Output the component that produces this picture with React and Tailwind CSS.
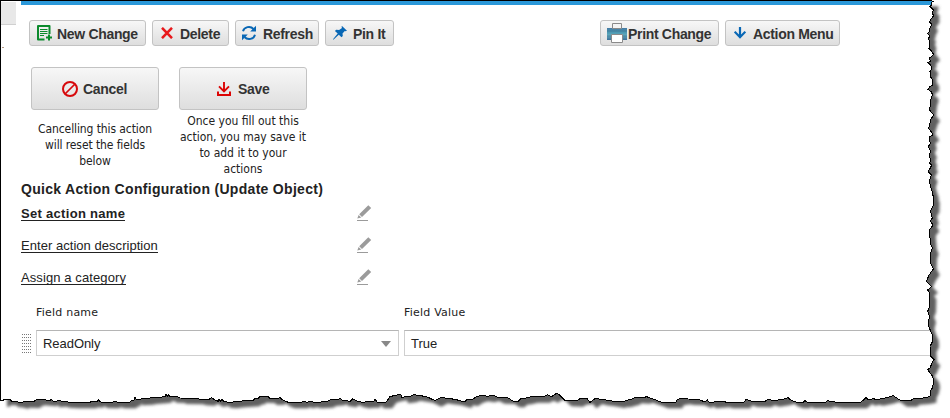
import React from "react";

// Torn page edge, in thirds of a pixel. Each run has its own origin.
const shift = (dx, dy, points) => points.map(([x, y]) => [x + dx, y + dy]);

const rightEdge = [
  ...shift(2670, 0, [
    [120, 1], [130, 4], [124, 8], [126, 14], [120, 20], [130, 30], [128, 38], [130, 48], [118, 65], [125, 72],
    [122, 80], [117, 90], [118, 96], [113, 100], [120, 108], [115, 115], [120, 125], [117, 145], [122, 150],
    [131, 163], [118, 175], [122, 183], [113, 188], [122, 195], [126, 205], [120, 215], [121, 230], [128, 240],
    [128, 255], [120, 260], [113, 268], [125, 276], [127, 285], [122, 300], [119, 330], [131, 345], [124, 355],
    [118, 375], [116, 385], [126, 398], [128, 405], [117, 412], [121, 430], [115, 440], [122, 455], [117, 465],
    [122, 480], [119, 490], [125, 496], [115, 515], [124, 525], [118, 545], [122, 560], [127, 575], [127, 585],
    [130, 588], [129, 620],
  ]),
  ...shift(2670, 624, [
    [124, 2], [122, 10], [127, 30], [121, 38], [129, 52], [118, 65], [120, 90], [121, 105], [127, 120], [122, 135],
    [121, 165], [130, 183], [118, 200], [109, 220], [125, 236], [113, 246], [120, 256], [119, 295], [113, 310],
    [119, 325], [114, 345], [118, 360], [127, 380], [128, 400], [120, 415], [122, 445], [132, 455], [126, 465],
    [120, 480], [113, 485], [128, 505], [131, 520], [127, 540], [121, 550],
  ]),
];

const bottomEdge = [
  ...shift(0, 1110, [
    [2, 92], [10, 92], [12, 88], [30, 88], [36, 94], [45, 94], [65, 98], [70, 95], [100, 96], [108, 90], [115, 88],
    [150, 91], [155, 88], [160, 94], [180, 92], [190, 95], [215, 97], [270, 97], [275, 94], [290, 95], [295, 90],
    [302, 96], [335, 97], [345, 94], [355, 97], [390, 97], [393, 92], [402, 90], [405, 82], [408, 88], [440, 86],
    [450, 84], [480, 82], [495, 80], [498, 73], [502, 78], [505, 74], [510, 80], [535, 81], [540, 84], [590, 85],
    [600, 88], [625, 89], [635, 83], [645, 90], [655, 94], [657, 88], [662, 94], [665, 88], [672, 95], [690, 97],
    [715, 94], [740, 92], [760, 91], [765, 86], [775, 85], [780, 80], [805, 81], [812, 87], [835, 86], [840, 82],
    [848, 90], [865, 97], [905, 97], [910, 94], [922, 97],
  ]),
  ...shift(930, 1110, [
    [0, 94], [15, 97], [50, 95], [60, 90], [85, 88], [92, 84], [95, 90], [120, 94], [128, 87], [140, 93], [158, 97],
    [175, 95], [190, 95], [195, 88], [202, 97], [228, 97], [240, 80], [255, 76], [272, 73], [275, 82], [300, 79],
    [312, 74], [350, 80], [375, 92], [395, 82], [405, 84], [435, 88], [465, 96], [470, 88], [485, 90], [500, 80],
    [515, 76], [535, 79], [548, 75], [565, 83], [595, 84], [610, 94], [625, 94], [632, 86], [645, 85], [665, 80],
    [700, 80], [712, 74], [725, 80], [738, 71], [745, 72], [765, 91], [800, 92], [810, 86], [830, 84], [840, 97],
    [858, 84], [870, 88], [895, 91], [925, 96],
  ]),
  ...shift(1860, 1110, [
    [0, 94], [15, 93], [25, 90], [40, 86], [45, 82], [70, 83], [80, 80], [90, 84], [110, 91], [125, 97], [168, 97],
    [172, 88], [190, 85], [205, 87], [235, 88], [245, 92], [255, 96], [262, 90], [268, 97], [310, 94], [320, 97],
    [372, 97], [378, 88], [392, 93], [435, 94], [445, 88], [460, 92], [490, 88], [505, 83], [512, 90], [530, 97],
    [550, 97], [555, 92], [562, 97], [618, 97], [622, 92], [650, 97], [722, 97], [730, 90], [738, 83], [745, 89],
    [760, 86], [770, 89], [800, 83], [820, 77], [830, 84], [842, 92], [872, 92], [880, 86], [910, 84], [930, 80],
  ]),
];

const outline = "M" + [[1, 1], ...rightEdge, ...[...bottomEdge].reverse()].map((p) => p.join(" ")).join("L") + "Z";

function TornEdge() {
  return (
    <svg className="pointer-events-none absolute inset-0 h-[418px] w-[950px]" viewBox="0 0 2850 1254">
      <defs>
        <clipPath id="outside">
          <path clipRule="evenodd" d={"M-30 -30H2900V1300H-30Z" + outline} />
        </clipPath>
        <filter id="soft" x="-5%" y="-5%" width="110%" height="110%">
          <feGaussianBlur stdDeviation="4.5" />
        </filter>
      </defs>
      <g clipPath="url(#outside)">
        <rect width="2850" height="1254" fill="#fff" />
        <path d={outline} transform="translate(19 18)" fill="#606060" filter="url(#soft)" />
      </g>
      <path d={outline} fill="none" stroke="#000" strokeWidth="3" shapeRendering="crispEdges" />
      <path d="M0 1.5H2793" stroke="#000" strokeWidth="3" />
      <path d="M1.5 0V1203" stroke="#000" strokeWidth="3" />
    </svg>
  );
}

function NewIcon() {
  return (
    <svg className="h-4 w-4 shrink-0" viewBox="0 0 16 16" fill="none" stroke="#0b8a2c">
      <path d="M8.500 14.500H2V1h11.500v8" strokeWidth="2" strokeLinejoin="round" />
      <path d="M4 4.500h7.500M4 6.500h7.500M4 8.500h7.500M4 10.500h4" strokeWidth="1" />
      <path d="M13 9.500v6M10 12.500h6" strokeWidth="2" />
    </svg>
  );
}

function DeleteIcon() {
  return (
    <svg className="h-3 w-3 shrink-0" viewBox="0 0 12 12">
      <path d="M1 .8 11 11.200M11 .8 1 11.200" stroke="#e8191c" strokeWidth="2.500" />
    </svg>
  );
}

function RefreshIcon() {
  return (
    <svg className="h-4 w-4 shrink-0" viewBox="0 0 16 16" fill="none">
      <path d="M2 6.300A6 5.500 0 0 1 12.500 4M14 9.700A6 5.500 0 0 1 3.500 12" stroke="#0867b5" strokeWidth="1.900" />
      <path d="M15 .8v5.700H9.200ZM1 15.200V9.500h5.800Z" fill="#0867b5" />
    </svg>
  );
}

function PinIcon() {
  return (
    <svg className="h-[14px] w-[14px] shrink-0" viewBox="0 0 14 14" fill="#0867b5">
      <path d="M9 0l5 4.700-1.400.5-.8-.3L9.500 7.500l.3 2.600L8.500 11.200 5.800 8.700.4 13.700l-.4-.4L4.700 7.500 1.900 5l1.300-1.200 2.900.3L9 2 8.500.8Z" />
    </svg>
  );
}

function PrinterIcon() {
  return (
    <svg className="h-5 w-5 shrink-0" viewBox="0 0 20 20">
      <defs>
        <linearGradient id="ink" x1="0" y1="0" x2="0" y2="1">
          <stop offset="0" stopColor="#467ba5" />
          <stop offset=".4" stopColor="#4d9bb3" />
          <stop offset=".6" stopColor="#63a9bd" />
          <stop offset="1" stopColor="#3c6f98" />
        </linearGradient>
      </defs>
      <path d="M0 5h20v12H0Z" fill="url(#ink)" />
      <path d="M0 8h20M0 13h20" stroke="#39728f" strokeWidth=".6" />
      <path d="M5.500.5h9v5h-9Z" fill="#f4f4f4" stroke="#8a8a8a" />
      <path d="M4.500 11.500h11v8h-11Z" fill="#fff" stroke="#8a8a8a" />
    </svg>
  );
}

function ArrowIcon() {
  return (
    <svg className="h-3 w-3 shrink-0" viewBox="0 0 12 12" fill="none" stroke="#0867b5">
      <path d="M6 0v10.500M.7 4.700 6 10.200l5.300-5.500" strokeWidth="2.200" />
    </svg>
  );
}

function CancelIcon() {
  return (
    <svg className="h-4 w-4 shrink-0" viewBox="0 0 16 16" fill="none" stroke="#d7090c" strokeWidth="2">
      <circle cx="8" cy="8" r="7" />
      <path d="M3 13 13 3" strokeWidth="1.700" />
    </svg>
  );
}

function SaveIcon() {
  return (
    <svg className="h-[14px] w-[14px] shrink-0" viewBox="0 0 14 14" fill="none" stroke="#dc0505">
      <path d="M7 0v9M2 4.300 7 9.300l5-5" strokeWidth="1.900" />
      <path d="M1 9.500V13h12V9.500" strokeWidth="2" />
    </svg>
  );
}

function PencilIcon() {
  return (
    <svg className="h-4 w-[15px]" viewBox="0 0 15 16" fill="#9b9b9b">
      <path d="M11.300.3 14.200 3 5 12 2.200 9.200ZM1.600 9.900 4.300 12.600.3 13.500Z" />
      <path d="M0 15h11v1H0Z" />
    </svg>
  );
}

const face =
  "rounded-[3px] border border-[#c3c3c3] bg-linear-to-b from-[#f7f7f7] to-[#dedede] font-bold text-[#333] tracking-[-0.32px] text-[14px]";

function ToolButton({ icon, label, className, textClass }) {
  return (
    <button className={`flex h-[26px] items-center ${face} ${className}`}>
      {icon}
      <span className={`whitespace-nowrap pt-[2px] leading-none ${textClass}`}>{label}</span>
    </button>
  );
}

function BigAction({ icon, label, note, noteClass }) {
  return (
    <div className="flex w-[128px] flex-col">
      <button className={`flex h-[43px] shrink-0 items-center ${face}`}>
        {icon}
        <span className="pt-px">{label}</span>
      </button>
      <p className={`whitespace-pre text-center font-['DejaVu_Sans_Condensed',sans-serif] text-[12px] leading-4 text-[#222] ${noteClass}`}>
        {note}
      </p>
    </div>
  );
}

function SettingRow({ label, className }) {
  return (
    <div className="flex h-8 w-[351px] items-start justify-between">
      <a className={`mt-[2px] border-b border-[#222] leading-[13px] ${className}`}>{label}</a>
      <PencilIcon />
    </div>
  );
}

export default function App() {
  return (
    <div className="relative h-[418px] w-[950px] overflow-hidden bg-white font-['Liberation_Sans',Arial,sans-serif] text-[13px] text-[#222]">
      <div className="flex h-[400px] w-[934px] pt-px">
        <aside className="flex w-[21px] shrink-0 flex-col pl-px pt-px">
          <div className="h-[23px] w-[15px] border-b border-[#d0d0d0] bg-[#e8e8e8]" />
          <div className="ml-px mt-[22px] h-px w-[2px] bg-[#b59a86]" />
        </aside>
        <main className="flex min-w-0 grow flex-col">
          <div className="h-1 shrink-0 bg-[#2b98d9]" />
          <div className="flex pl-2 pt-[15px]">
            <div className="flex gap-[6px]">
              <ToolButton icon={<NewIcon />} label="New Change" className="w-[117px] pl-[6px]" textClass="ml-[5px]" />
              <ToolButton icon={<DeleteIcon />} label="Delete" className="w-[77px] pl-2" textClass="ml-[7px]" />
              <ToolButton icon={<RefreshIcon />} label="Refresh" className="w-[84px] pl-[5px]" textClass="ml-[6px]" />
              <ToolButton icon={<PinIcon />} label="Pin It" className="w-[69px] pl-[7px]" textClass="ml-[6px]" />
            </div>
            <div className="ml-[206px] flex gap-[6px]">
              <ToolButton icon={<PrinterIcon />} label="Print Change" className="w-[119px] pl-[6px]" textClass="ml-px" />
              <ToolButton icon={<ArrowIcon />} label="Action Menu" className="w-[115px] pl-2" textClass="ml-[7px]" />
            </div>
          </div>
          <div className="flex h-[135px] shrink-0 gap-5 pl-[10px] pt-[21px]">
            <BigAction
              icon={<span className="ml-[30px] mr-[5px]"><CancelIcon /></span>}
              label="Cancel"
              note={"Cancelling this action\nwill reset the fields\nbelow"}
              noteClass="mt-[11px] tracking-[-0.1px]"
            />
            <BigAction
              icon={<span className="ml-[37px] mr-[7px]"><SaveIcon /></span>}
              label="Save"
              note={"Once you fill out this\naction, you may save it\nto add it to your\nactions"}
              noteClass="mt-[3px]"
            />
          </div>
          <h1 className="whitespace-nowrap text-[14px] font-bold leading-[16px] tracking-[0.3px]">
            Quick Action Configuration (Update Object)
          </h1>
          <div className="mt-[8px] flex flex-col">
            <SettingRow label="Set action name" className="font-bold tracking-[0.3px]" />
            <SettingRow label="Enter action description" className="tracking-[0.04px]" />
            <SettingRow label="Assign a category" className="tracking-[0.1px]" />
          </div>
          <div className="flex pl-[15px] pt-1 font-['DejaVu_Sans',Verdana,sans-serif] text-[11px] leading-4 tracking-[0.22px]">
            <span className="w-[368px]">Field name</span>
            <span>Field Value</span>
          </div>
          <div className="mt-[9px] flex items-center">
            <div className="ml-px h-[19px] w-[9px] bg-[repeating-linear-gradient(180deg,transparent_0_1px,white_1px_3px),repeating-linear-gradient(90deg,#777_0_1px,transparent_1px_2px)]" />
            <div className="ml-[5px] flex h-[26px] w-[363px] items-center justify-between border border-[#cfcfcf] border-t-[#b5b5b5] pl-[6px] pr-[7px]">
              <span className="pt-[2px] tracking-[-0.05px]">ReadOnly</span>
              <span className="mt-[2px] h-0 w-0 border-x-[5px] border-t-[6px] border-x-transparent border-t-[#888]" />
            </div>
            <div className="ml-[5px] flex h-[26px] grow items-center border border-r-0 border-[#cfcfcf] border-t-[#b5b5b5] pl-[6px] pt-[2px]">True</div>
          </div>
        </main>
      </div>
      <TornEdge />
    </div>
  );
}
